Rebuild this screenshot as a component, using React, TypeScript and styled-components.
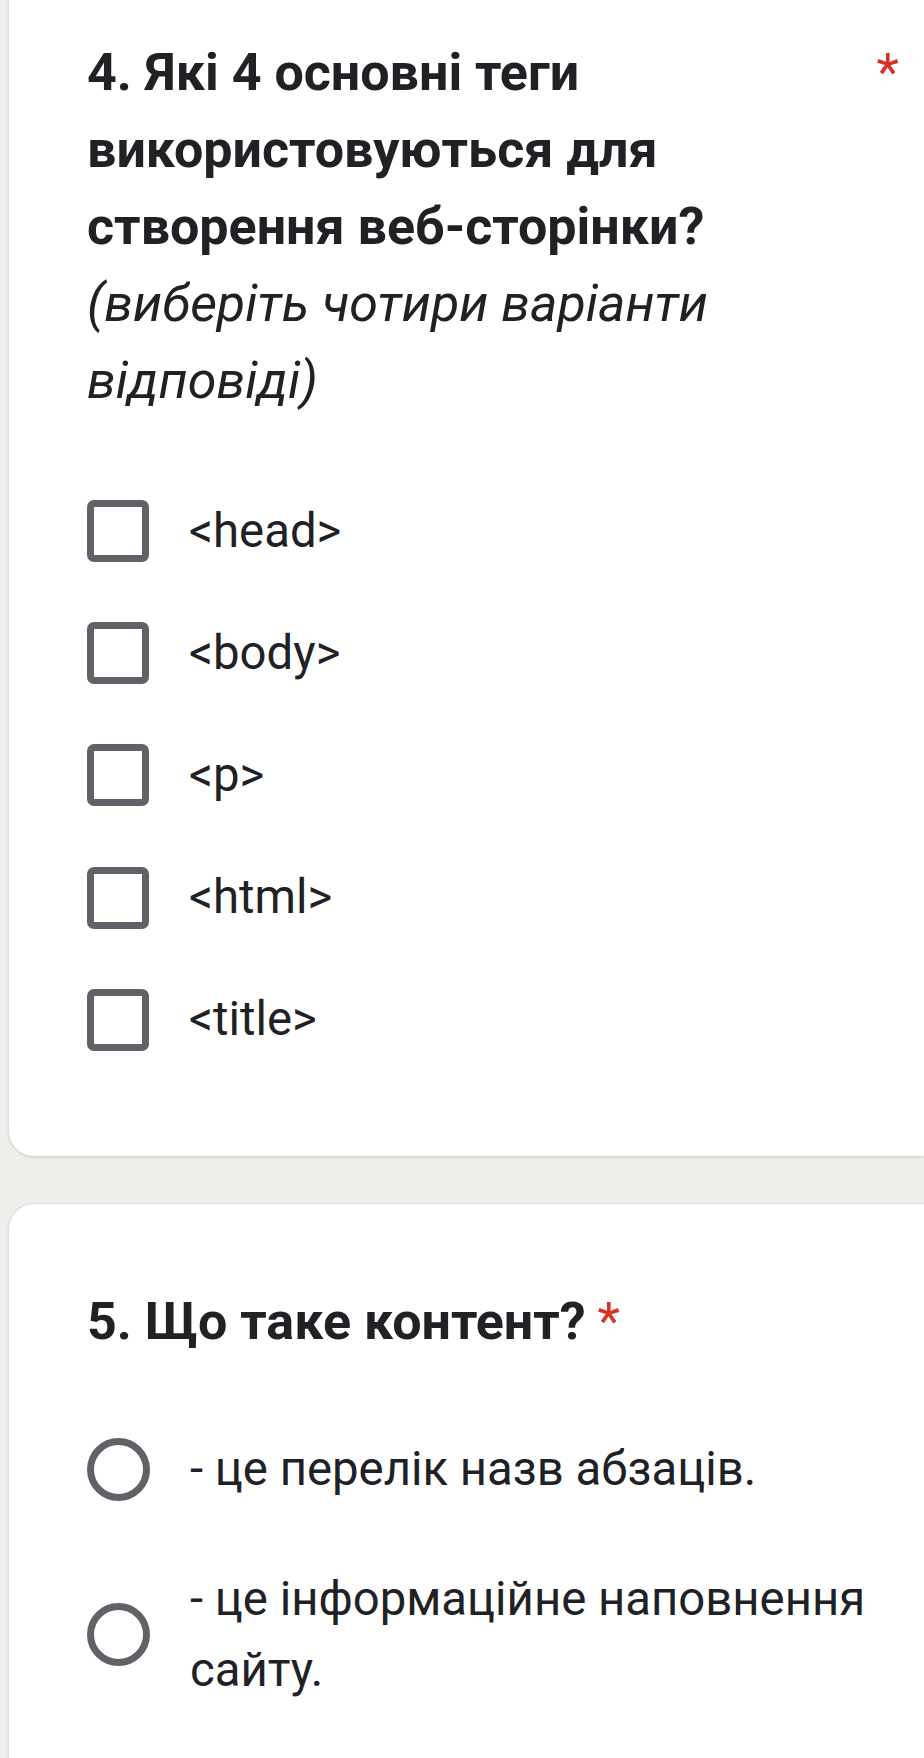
import React from 'react';
import styled, { createGlobalStyle } from 'styled-components';

const GlobalStyle = createGlobalStyle`
  html, body {
    margin: 0;
    padding: 0;
    background: #efeeea;
  }
  body {
    font-family: Roboto, "Noto Sans", Arial, sans-serif;
    color: #202124;
    -webkit-font-smoothing: antialiased;
  }
`;

const Page = styled.div`
  display: flex;
  flex-direction: column;
  gap: 46px;
  padding-left: 8px;
  width: 924px;
  height: 1758px;
  overflow: hidden;
  box-sizing: border-box;
`;

// first card is cut off at the top, second one runs past the bottom
const Card = styled.section<{ $first?: boolean }>`
  background: #fff;
  border: 1px solid #dadce0;
  border-right: none;
  box-shadow: 0 1px 2px rgba(60, 64, 67, 0.12);
  border-radius: ${({ $first }) => ($first ? '0 0 0 26px' : '26px 0 0 0')};
  border-top: ${({ $first }) => ($first ? 'none' : '1px solid #dadce0')};
  border-bottom: ${({ $first }) => ($first ? '1px solid #dadce0' : 'none')};
  padding: ${({ $first }) => ($first ? '34px 25px 75px 78px' : '79px 25px 60px 78px')};
  flex: ${({ $first }) => ($first ? '0 0 auto' : '1 0 auto')};
`;

const TitleRow = styled.div`
  display: flex;
  align-items: flex-start;
  gap: 12px;
`;

const Title = styled.div`
  font-size: 52px;
  line-height: 77px;
  font-weight: 700;
  color: #202124;
  flex: 0 1 auto;
`;

const Hint = styled.span`
  display: block;
  font-weight: 400;
  font-style: italic;
  color: #202124;
`;

const Star = styled.span<{ $inline?: boolean }>`
  color: #d93025;
  font-size: 52px;
  line-height: 77px;
  font-weight: 400;
  margin-left: ${({ $inline }) => ($inline ? '0' : 'auto')};
`;

const Options = styled.div<{ $gapTop: number; $gap: number }>`
  display: flex;
  flex-direction: column;
  gap: ${({ $gap }) => $gap}px;
  margin-top: ${({ $gapTop }) => $gapTop}px;
`;

const Option = styled.label`
  display: flex;
  align-items: center;
  gap: 40px;
  padding: 25.6px 0;
`;

const CheckBox = styled.span`
  flex: 0 0 auto;
  width: 62px;
  height: 62px;
  box-sizing: border-box;
  border: 7px solid #5f6368;
  border-radius: 7px;
`;

const Radio = styled.span`
  flex: 0 0 auto;
  width: 63px;
  height: 63px;
  box-sizing: border-box;
  border: 7px solid #5f6368;
  border-radius: 50%;
`;

const OptionText = styled.span`
  font-size: 47.3px;
  line-height: 71px;
  color: #202124;
`;

const tags = ['<head>', '<body>', '<p>', '<html>', '<title>'];
const answers = ['- це перелік назв абзаців.', '- це інформаційне наповнення сайту.'];

export default function App() {
  return (
    <>
      <GlobalStyle />
      <Page>
        <Card $first>
          <TitleRow>
            <Title>
              4. Які 4 основні теги використовуються для створення веб-сторінки?
              <Hint>(виберіть чотири варіанти відповіді)</Hint>
            </Title>
            <Star>*</Star>
          </TitleRow>
          <Options $gapTop={51} $gap={0}>
            {tags.map((t) => (
              <Option key={t}>
                <CheckBox />
                <OptionText>{t}</OptionText>
              </Option>
            ))}
          </Options>
        </Card>
        <Card>
          <TitleRow>
            <Title>5. Що таке контент?</Title>
            <Star $inline>*</Star>
          </TitleRow>
          <Options $gapTop={48} $gap={8}>
            {answers.map((a) => (
              <Option key={a}>
                <Radio />
                <OptionText>{a}</OptionText>
              </Option>
            ))}
          </Options>
        </Card>
      </Page>
    </>
  );
}
